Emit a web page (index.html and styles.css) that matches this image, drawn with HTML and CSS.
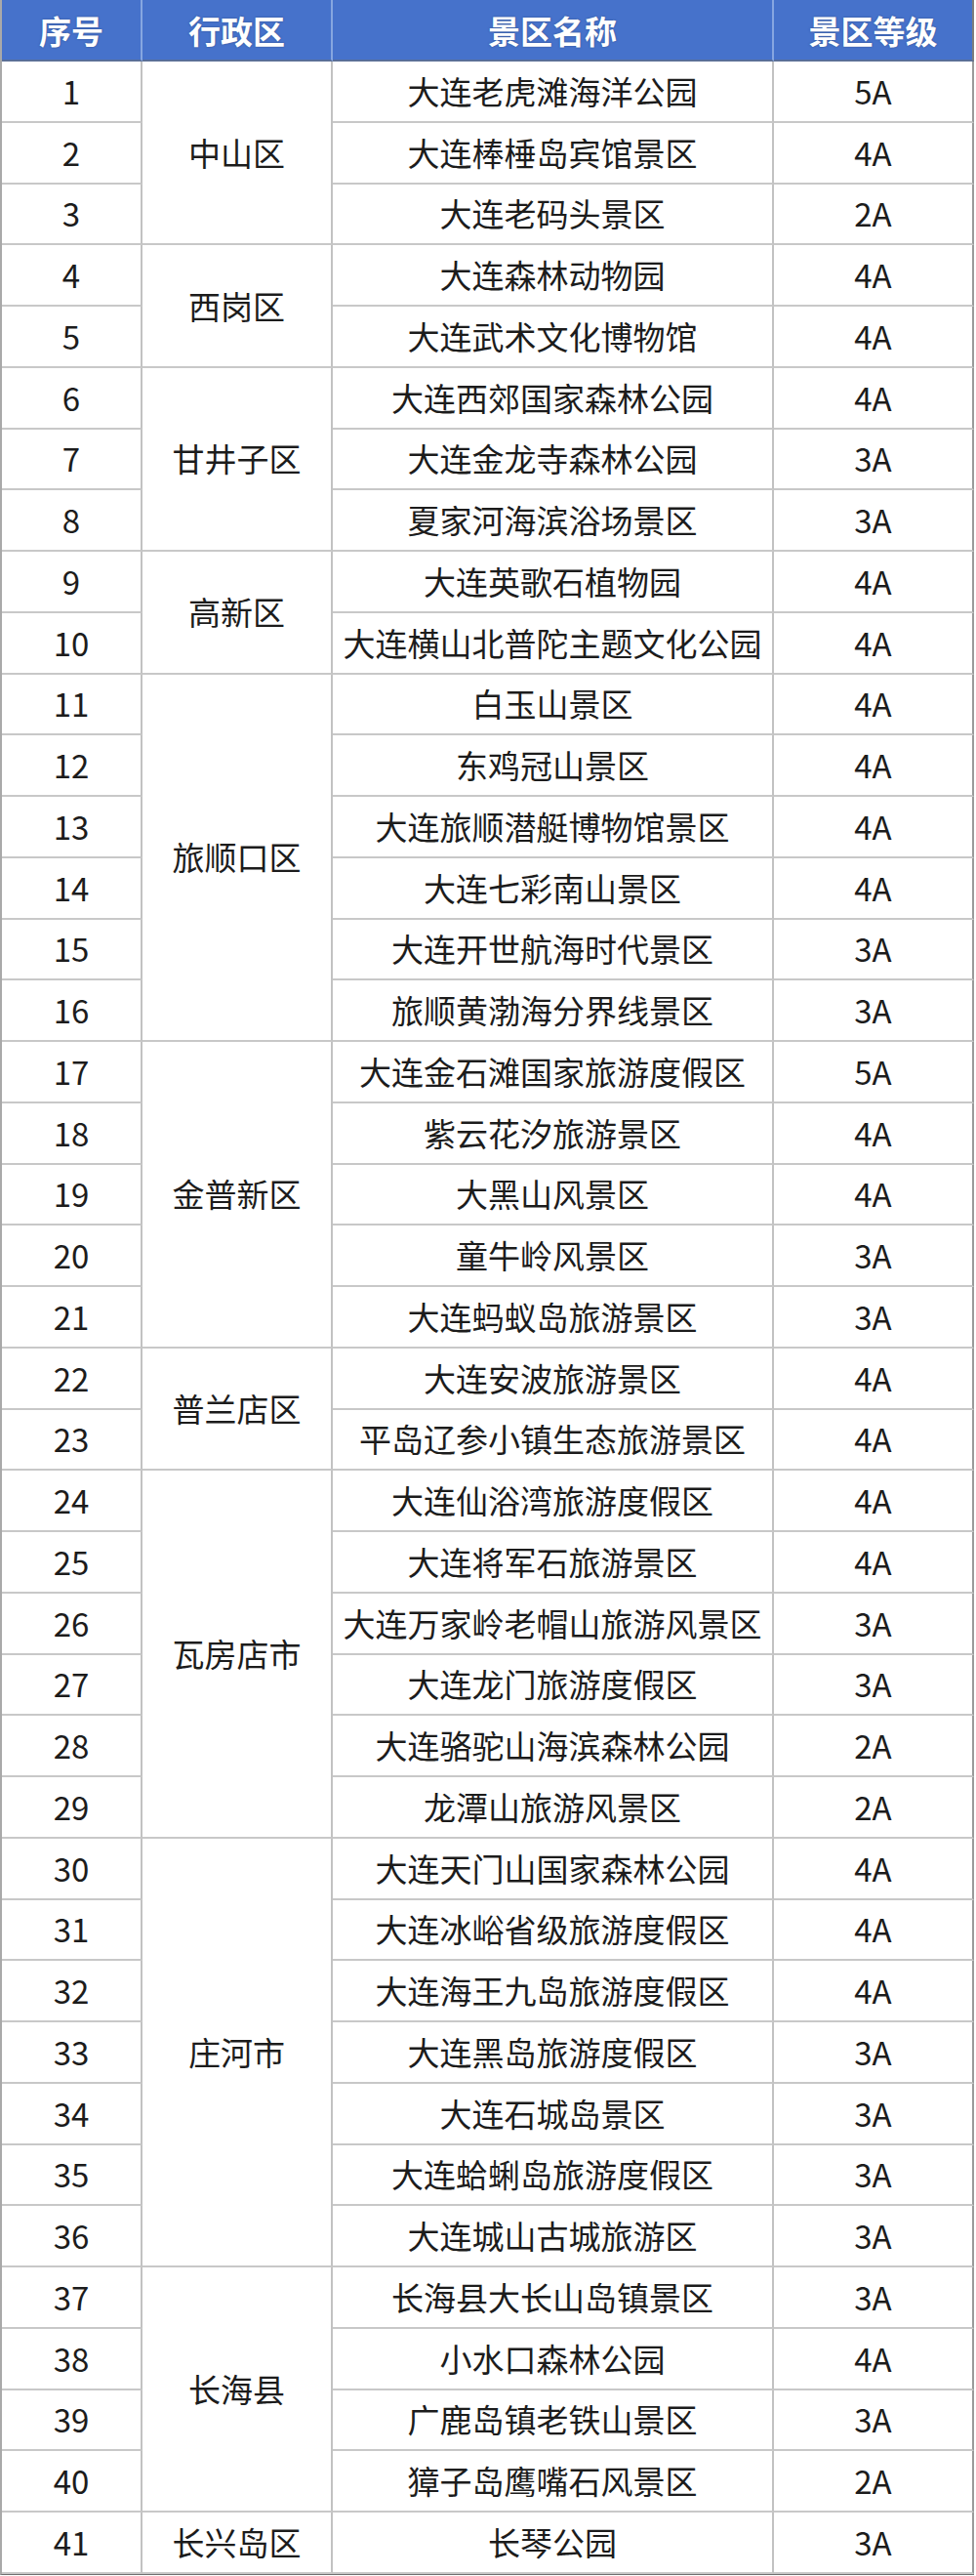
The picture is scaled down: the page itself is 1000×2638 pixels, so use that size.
FILE: index.html
```html
<!DOCTYPE html>
<html lang="zh-CN">
<head>
<meta charset="utf-8">
<title>大连A级景区</title>
<link rel="stylesheet" href="styles.css">
</head>
<body>
<div class="sheet">
  <div class="hd">序号</div><div class="hd">行政区</div><div class="hd">景区名称</div><div class="hd last">景区等级</div>

  <div class="c">1</div><div class="c dist span3">中山区</div><div class="c">大连老虎滩海洋公园</div><div class="c g">5A</div>
  <div class="c">2</div><div class="c">大连棒棰岛宾馆景区</div><div class="c g">4A</div>
  <div class="c">3</div><div class="c">大连老码头景区</div><div class="c g">2A</div>

  <div class="c">4</div><div class="c dist span2">西岗区</div><div class="c">大连森林动物园</div><div class="c g">4A</div>
  <div class="c">5</div><div class="c">大连武术文化博物馆</div><div class="c g">4A</div>

  <div class="c">6</div><div class="c dist span3">甘井子区</div><div class="c">大连西郊国家森林公园</div><div class="c g">4A</div>
  <div class="c">7</div><div class="c">大连金龙寺森林公园</div><div class="c g">3A</div>
  <div class="c">8</div><div class="c">夏家河海滨浴场景区</div><div class="c g">3A</div>

  <div class="c">9</div><div class="c dist span2">高新区</div><div class="c">大连英歌石植物园</div><div class="c g">4A</div>
  <div class="c">10</div><div class="c">大连横山北普陀主题文化公园</div><div class="c g">4A</div>

  <div class="c">11</div><div class="c dist span6">旅顺口区</div><div class="c">白玉山景区</div><div class="c g">4A</div>
  <div class="c">12</div><div class="c">东鸡冠山景区</div><div class="c g">4A</div>
  <div class="c">13</div><div class="c">大连旅顺潜艇博物馆景区</div><div class="c g">4A</div>
  <div class="c">14</div><div class="c">大连七彩南山景区</div><div class="c g">4A</div>
  <div class="c">15</div><div class="c">大连开世航海时代景区</div><div class="c g">3A</div>
  <div class="c">16</div><div class="c">旅顺黄渤海分界线景区</div><div class="c g">3A</div>

  <div class="c">17</div><div class="c dist span5">金普新区</div><div class="c">大连金石滩国家旅游度假区</div><div class="c g">5A</div>
  <div class="c">18</div><div class="c">紫云花汐旅游景区</div><div class="c g">4A</div>
  <div class="c">19</div><div class="c">大黑山风景区</div><div class="c g">4A</div>
  <div class="c">20</div><div class="c">童牛岭风景区</div><div class="c g">3A</div>
  <div class="c">21</div><div class="c">大连蚂蚁岛旅游景区</div><div class="c g">3A</div>

  <div class="c">22</div><div class="c dist span2">普兰店区</div><div class="c">大连安波旅游景区</div><div class="c g">4A</div>
  <div class="c">23</div><div class="c">平岛辽参小镇生态旅游景区</div><div class="c g">4A</div>

  <div class="c">24</div><div class="c dist span6">瓦房店市</div><div class="c">大连仙浴湾旅游度假区</div><div class="c g">4A</div>
  <div class="c">25</div><div class="c">大连将军石旅游景区</div><div class="c g">4A</div>
  <div class="c">26</div><div class="c">大连万家岭老帽山旅游风景区</div><div class="c g">3A</div>
  <div class="c">27</div><div class="c">大连龙门旅游度假区</div><div class="c g">3A</div>
  <div class="c">28</div><div class="c">大连骆驼山海滨森林公园</div><div class="c g">2A</div>
  <div class="c">29</div><div class="c">龙潭山旅游风景区</div><div class="c g">2A</div>

  <div class="c">30</div><div class="c dist span7">庄河市</div><div class="c">大连天门山国家森林公园</div><div class="c g">4A</div>
  <div class="c">31</div><div class="c">大连冰峪省级旅游度假区</div><div class="c g">4A</div>
  <div class="c">32</div><div class="c">大连海王九岛旅游度假区</div><div class="c g">4A</div>
  <div class="c">33</div><div class="c">大连黑岛旅游度假区</div><div class="c g">3A</div>
  <div class="c">34</div><div class="c">大连石城岛景区</div><div class="c g">3A</div>
  <div class="c">35</div><div class="c">大连蛤蜊岛旅游度假区</div><div class="c g">3A</div>
  <div class="c">36</div><div class="c">大连城山古城旅游区</div><div class="c g">3A</div>

  <div class="c">37</div><div class="c dist span4">长海县</div><div class="c">长海县大长山岛镇景区</div><div class="c g">3A</div>
  <div class="c">38</div><div class="c">小水口森林公园</div><div class="c g">4A</div>
  <div class="c">39</div><div class="c">广鹿岛镇老铁山景区</div><div class="c g">3A</div>
  <div class="c">40</div><div class="c">獐子岛鹰嘴石风景区</div><div class="c g">2A</div>

  <div class="c">41</div><div class="c dist">长兴岛区</div><div class="c">长琴公园</div><div class="c g">3A</div>
</div>
</body>
</html>
```

FILE: styles.css
```css
html, body {
  margin: 0;
  padding: 0;
  background: #ffffff;
}

.sheet {
  width: 998px;
  box-sizing: border-box;
  border-left: 2px solid #a9a9a9;
  border-bottom: 1px solid #6f6f6f;
  display: grid;
  grid-template-columns: 144px 195px 452px 205px;
  grid-template-rows: 63px repeat(41, 62.75px);
  font-family: "Noto Sans CJK SC", "Microsoft YaHei", sans-serif;
  font-size: 33px;
  color: #1c1c1c;
}

.hd {
  background: #4672cb;
  color: #ffffff;
  font-weight: 700;
  display: flex;
  align-items: center;
  justify-content: center;
  border-right: 2px solid #86a6e0;
  border-bottom: 2px solid #5a6f98;
  box-sizing: border-box;
  text-shadow: 0 0 2px rgba(30, 50, 90, 0.6);
}

.hd.last {
  border-right: 2px solid #7d7d7d;
}

.c {
  display: flex;
  align-items: center;
  justify-content: center;
  box-sizing: border-box;
  border-right: 2px solid #c2c2c2;
  border-bottom: 2px solid #c8c8c8;
  background: #ffffff;
  white-space: nowrap;
  line-height: 1;
}

.c.g {
  border-right-color: #9a9a9a;
}

.dist {
  background: #ffffff;
}

.span2 { grid-row: span 2; }
.span3 { grid-row: span 3; }
.span4 { grid-row: span 4; }
.span5 { grid-row: span 5; }
.span6 { grid-row: span 6; }
.span7 { grid-row: span 7; }
```
